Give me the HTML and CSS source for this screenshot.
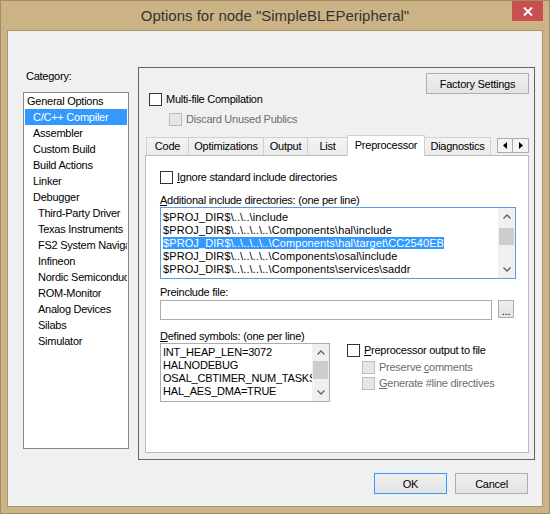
FILE: index.html
```html
<!DOCTYPE html>
<html lang="en">
<head>
  <meta charset="UTF-8">
  <title>Options for node "SimpleBLEPeripheral"</title>
  <link rel="stylesheet" href="styles.css">
</head>
<body>
  <div class="window">
    <div class="titlebar">
      Options for node "SimpleBLEPeripheral"
      <div class="close">
        <svg width="10" height="9" viewBox="0 0 10 9"><path d="M1 0.5 L9 8.5 M9 0.5 L1 8.5" stroke="#fff" stroke-width="2"/></svg>
      </div>
    </div>

    <div class="client">
      <div class="main">
        <div class="category">
          <div class="cat-label">Category:</div>
          <div class="cat-list">
            <div class="item">General Options</div>
            <div class="item l1 selected">C/C++ Compiler</div>
            <div class="item l1">Assembler</div>
            <div class="item l1">Custom Build</div>
            <div class="item l1">Build Actions</div>
            <div class="item l1">Linker</div>
            <div class="item l1">Debugger</div>
            <div class="item l2">Third-Party Driver</div>
            <div class="item l2">Texas Instruments</div>
            <div class="item l2">FS2 System Navigator</div>
            <div class="item l2">Infineon</div>
            <div class="item l2">Nordic Semiconductor</div>
            <div class="item l2">ROM-Monitor</div>
            <div class="item l2">Analog Devices</div>
            <div class="item l2">Silabs</div>
            <div class="item l2">Simulator</div>
          </div>
        </div>

        <div class="panel">
          <div class="panel-top">
            <div class="top-checks">
              <div class="check"><span class="box"></span>Multi-file Compilation</div>
              <div class="check sub disabled"><span class="box"></span>Discard Unused Publics</div>
            </div>
            <button class="btn factory">Factory Settings</button>
          </div>

          <div class="tabs">
            <div class="tab-strip">
              <div class="tab t-code">Code</div>
              <div class="tab t-opt">Optimizations</div>
              <div class="tab t-out">Output</div>
              <div class="tab t-list">List</div>
              <div class="tab t-pre active">Preprocessor</div>
              <div class="tab t-diag">Diagnostics</div>
              <div class="tab-scroll">
                <span><svg width="4" height="7" viewBox="0 0 4 7"><polygon points="4,0 0,3.5 4,7" fill="#000"/></svg></span>
                <span><svg width="4" height="7" viewBox="0 0 4 7"><polygon points="0,0 4,3.5 0,7" fill="#000"/></svg></span>
              </div>
            </div>

            <div class="tab-page">
              <div class="check"><span class="box"></span><span><u>I</u>gnore standard include directories</span></div>

              <div class="label first-label"><u>A</u>dditional include directories: (one per line)</div>
              <div class="listbox focused inc-list">
                <div class="lines">
                  <div class="line">$PROJ_DIR$\..\..\include</div>
                  <div class="line">$PROJ_DIR$\..\..\..\..\Components\hal\include</div>
                  <div class="line"><span class="hl">$PROJ_DIR$\..\..\..\..\Components\hal\target\CC2540EB</span></div>
                  <div class="line">$PROJ_DIR$\..\..\..\..\Components\osal\include</div>
                  <div class="line">$PROJ_DIR$\..\..\..\..\Components\services\saddr</div>
                </div>
                <div class="vscroll">
                  <div class="arrow"><svg width="8" height="5" viewBox="0 0 8 5"><path d="M0.5 4.5 L4 1 L7.5 4.5" fill="none" stroke="#606060" stroke-width="1.3"/></svg></div>
                  <div class="track"><div class="thumb inc-thumb"></div></div>
                  <div class="arrow"><svg width="8" height="5" viewBox="0 0 8 5"><path d="M0.5 0.5 L4 4 L7.5 0.5" fill="none" stroke="#606060" stroke-width="1.3"/></svg></div>
                </div>
              </div>

              <div class="label pre-label">Preinclude file:</div>
              <div class="file-row">
                <div class="textbox"></div>
                <button class="btn browse">...</button>
              </div>

              <div class="defs-row">
                <div class="defs-col">
                  <div class="label"><u>D</u>efined symbols: (one per line)</div>
                  <div class="listbox def-list">
                    <div class="lines">
                      <div class="line">INT_HEAP_LEN=3072</div>
                      <div class="line">HALNODEBUG</div>
                      <div class="line">OSAL_CBTIMER_NUM_TASKS=1</div>
                      <div class="line">HAL_AES_DMA=TRUE</div>
                    </div>
                    <div class="vscroll">
                      <div class="arrow"><svg width="8" height="5" viewBox="0 0 8 5"><path d="M0.5 4.5 L4 1 L7.5 4.5" fill="none" stroke="#606060" stroke-width="1.3"/></svg></div>
                      <div class="track"><div class="thumb def-thumb"></div></div>
                      <div class="arrow"><svg width="8" height="5" viewBox="0 0 8 5"><path d="M0.5 0.5 L4 4 L7.5 0.5" fill="none" stroke="#606060" stroke-width="1.3"/></svg></div>
                    </div>
                  </div>
                </div>
                <div class="out-col">
                  <div class="check"><span class="box"></span><span><u>P</u>reprocessor output to file</span></div>
                  <div class="check sub disabled row2"><span class="box"></span><span>Preserve <u>c</u>omments</span></div>
                  <div class="check sub disabled row3"><span class="box"></span><span><u>G</u>enerate #line directives</span></div>
                </div>
              </div>
            </div>
          </div>
        </div>
      </div>

      <div class="footer">
        <button class="btn default">OK</button>
        <button class="btn">Cancel</button>
      </div>
    </div>
  </div>
</body>
</html>
```

FILE: styles.css
```css
body {
  margin: 0;
  background: #fff;
  font-family: "Liberation Sans", Arial, sans-serif;
  font-size: 11px;
  letter-spacing: -0.25px;
  color: #000;
}
.window {
  width: 550px;
  height: 514px;
  box-sizing: border-box;
  background: #cbb385;
  border: 1px solid #a38d68;
  display: flex;
  flex-direction: column;
}
.titlebar {
  position: relative;
  height: 30px;
  line-height: 30px;
  text-align: center;
  font-size: 15px;
  letter-spacing: 0;
  color: #333;
}
.close {
  position: absolute;
  top: 0;
  right: 6px;
  width: 31px;
  height: 20px;
  background: #c75050;
  display: flex;
  align-items: center;
  justify-content: center;
}
.client {
  flex: 1;
  margin: 0 7px 7px;
  background: #f0f0f0;
  box-shadow: 0 0 0 1px #a8966f;
  display: flex;
  flex-direction: column;
}
.main {
  display: flex;
  align-items: flex-start;
  padding: 36px 0 0 15px;
}

/* category tree */
.category {
  width: 106px;
  margin-top: 3px;
}
.cat-label {
  line-height: 13px;
  padding-left: 3px;
}
.cat-list {
  margin-top: 9px;
  height: 357px;
  box-sizing: border-box;
  border: 1px solid #828790;
  background: #fff;
  overflow: hidden;
}
.item {
  height: 16px;
  line-height: 16px;
  margin: 0 1px;
  padding-left: 2px;
  white-space: nowrap;
  overflow: hidden;
}
.item.l1 { padding-left: 8px; }
.item.l2 { padding-left: 13px; }
.item.selected {
  background: #3399ff;
  color: #fff;
}

/* right panel */
.panel {
  margin-left: 9px;
  width: 397px;
  height: 393px;
  box-sizing: border-box;
  border: 1px solid #646464;
}
.panel-top {
  display: flex;
  justify-content: space-between;
  align-items: flex-start;
}
.top-checks {
  padding: 25px 0 0 10px;
}
.check {
  display: flex;
  align-items: center;
  height: 13px;
  line-height: 13px;
  white-space: nowrap;
}
.box {
  width: 13px;
  height: 13px;
  box-sizing: border-box;
  border: 1px solid #333;
  background: #fff;
  margin-right: 4px;
  flex: none;
}
.check.sub {
  margin-top: 7px;
  padding-left: 20px;
}
.check.disabled { color: #6d6d6d; }
.check.disabled .box {
  border-color: #bcbcbc;
  background: #e6e6e6;
}
.btn {
  box-sizing: border-box;
  height: 21px;
  padding: 0;
  border: 1px solid #acacac;
  background: linear-gradient(#efefef, #e3e3e3);
  font: inherit;
  letter-spacing: inherit;
  color: #000;
}
.factory {
  width: 103px;
  margin: 5px 5px 0 0;
}

/* tab control */
.tabs {
  margin: 9px 5px 0 6px;
}
.tab-strip {
  display: flex;
  align-items: flex-end;
  height: 20px;
  padding-left: 1px;
}
.tab {
  box-sizing: border-box;
  height: 18px;
  line-height: 17px;
  margin-right: -1px;
  border: 1px solid #d0d0d0;
  border-bottom: none;
  background: linear-gradient(#f3f3f3, #ebebeb);
  text-align: center;
  white-space: nowrap;
}
.tab.active {
  position: relative;
  z-index: 1;
  height: 21px;
  line-height: 18px;
  margin-bottom: -1px;
  background: #fff;
}
.t-code { width: 43px; }
.t-opt { width: 76px; }
.t-out { width: 45px; }
.t-list { width: 41px; }
.t-pre { width: 78px; }
.t-diag { width: 67px; }
.tab-scroll {
  display: flex;
  align-self: flex-start;
  margin: 3px 0 0 auto;
}
.tab-scroll span {
  box-sizing: border-box;
  width: 16px;
  height: 15px;
  border: 1px solid #adadad;
  background: #f4f4f4;
  display: flex;
  align-items: center;
  justify-content: center;
}
.tab-scroll span + span { margin-left: -1px; width: 17px; }
.tab-page {
  box-sizing: border-box;
  height: 298px;
  border: 1px solid #bcbcbc;
  background: #fff;
  padding: 15px 0 0 14px;
}
.label {
  line-height: 13px;
  white-space: nowrap;
}
.first-label { margin-top: 10px; }
.pre-label { margin-top: 7px; }

/* list boxes */
.listbox {
  display: flex;
  box-sizing: border-box;
  border: 1px solid #abadb3;
  background: #fff;
}
.listbox.focused { border-color: #569de5; }
.lines {
  flex: 1;
  overflow: hidden;
  padding: 3px 0 0 2px;
  white-space: nowrap;
}
.line {
  height: 13px;
  line-height: 13px;
  letter-spacing: 0.1px;
}
.hl {
  background: #3399ff;
  color: #fff;
}
.inc-list {
  width: 356px;
  height: 72px;
}
.def-list {
  width: 170px;
  height: 59px;
}
.def-list .lines { padding-top: 2px; }
.def-list .line { letter-spacing: -0.2px; }
.vscroll {
  width: 17px;
  display: flex;
  flex-direction: column;
  background: #f0f0f0;
}
.arrow {
  height: 17px;
  display: flex;
  align-items: center;
  justify-content: center;
}
.track {
  flex: 1;
  padding: 0 1px;
}
.thumb { background: #cdcdcd; }
.inc-thumb {
  height: 17px;
  margin-top: 3px;
}
.def-thumb { height: 18px; }

.file-row {
  display: flex;
  align-items: flex-start;
  margin-top: 1px;
}
.textbox {
  box-sizing: border-box;
  width: 332px;
  height: 20px;
  border: 1px solid #abadb3;
  background: #fff;
}
.browse {
  width: 16px;
  height: 18px;
  margin-left: 6px;
  line-height: 20px;
  overflow: hidden;
}
.defs-row {
  display: flex;
  margin-top: 10px;
}
.out-col {
  margin: 14px 0 0 17px;
}
.out-col .check.sub { padding-left: 15px; }
.out-col .row2 { margin-top: 4px; }
.out-col .row3 { margin-top: 3px; }

.footer {
  display: flex;
  justify-content: flex-end;
  gap: 8px;
  margin-top: 13px;
  padding-right: 14px;
}
.footer .btn { width: 73px; }
.btn.default { border-color: #3399ff; }
```
